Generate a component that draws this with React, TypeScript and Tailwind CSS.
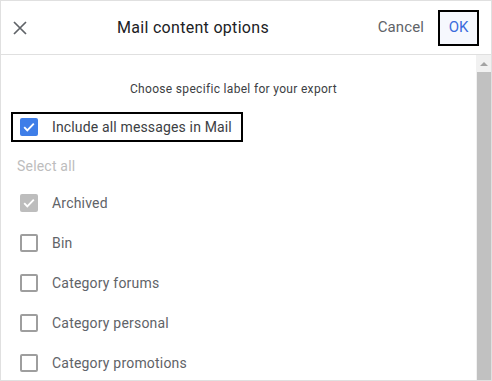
const labels = [
  { name: "Archived", checked: true },
  { name: "Bin", checked: false },
  { name: "Category forums", checked: false },
  { name: "Category personal", checked: false },
  { name: "Category promotions", checked: false },
];

function Check({ color }: { color: string }) {
  return (
    <svg viewBox="0 0 18 18" className="h-[18px] w-[18px]">
      <rect x="0" y="0" width="18" height="18" rx="2" fill={color} />
      <path d="M4.2 9.2l3.1 3.1 6.5-6.6" fill="none" stroke="white" strokeWidth="1.9" />
    </svg>
  );
}

export default function App() {
  return (
    <div className="flex h-[381px] w-[492px] flex-col border border-[#e0e0e0] bg-white font-['Roboto',sans-serif]">
      {/* Header */}
      <div className="flex h-[54px] shrink-0 items-center border-b border-[#e0e0e0]">
        <svg viewBox="0 0 14 14" className="ml-[12px] h-[14px] w-[14px]">
          <path d="M1 1l12 12M13 1L1 13" stroke="#5f6368" strokeWidth="1.7" fill="none" />
        </svg>
        <div className="ml-[90px] text-[16px] tracking-[0.3px] text-[#202124]">Mail content options</div>
        <div className="ml-auto text-[15px] tracking-[0.1px] text-[#5f6368]">Cancel</div>
        <div className="ml-[14px] mr-[12px] flex h-[36px] w-[41px] items-center justify-center border-2 border-black bg-[#f6f8fe] text-[15px] text-[#3b6bdc]">
          OK
        </div>
      </div>

      {/* Body */}
      <div className="flex min-h-0 flex-1">
        <div className="flex-1 overflow-hidden">
          <div className="mt-[25px] pr-[10px] text-center text-[12px] tracking-[0.32px] text-[#3c4043]">
            Choose specific label for your export
          </div>

          <div className="ml-[10px] mt-[14px] flex h-[30px] w-[232px] items-center border-2 border-black">
            <div className="ml-[7px]">
              <Check color="#3f7ee8" />
            </div>
            <span className="ml-[14px] text-[14px] tracking-[0.15px] text-[#3c4043]">Include all messages in Mail</span>
          </div>

          <div className="ml-[16px] mt-[14px] text-[14px] tracking-[0.2px] text-[#bdbdbd]">Select all</div>

          <div className="mt-[6px] flex flex-col">
            {labels.map((l) => (
              <div key={l.name} className="flex h-[40px] items-center pl-[19px]">
                {l.checked ? (
                  <Check color="#bdbdbd" />
                ) : (
                  <div className="h-[18px] w-[18px] rounded-[2px] border-2 border-[#9e9e9e]" />
                )}
                <span className="ml-[14px] text-[14px] tracking-[0.2px] text-[#5f6368]">{l.name}</span>
              </div>
            ))}
          </div>
        </div>

        {/* Scrollbar */}
        <div className="flex w-[15px] shrink-0 flex-col bg-[#f1f1f1] pl-[1px]">
          <div className="flex h-[17px] items-center justify-center">
            <div className="h-0 w-0 border-x-[4px] border-b-[4px] border-x-transparent border-b-[#a3a3a3]" />
          </div>
          <div className="flex-1 bg-[#c1c1c1]" />
        </div>
      </div>
    </div>
  );
}
